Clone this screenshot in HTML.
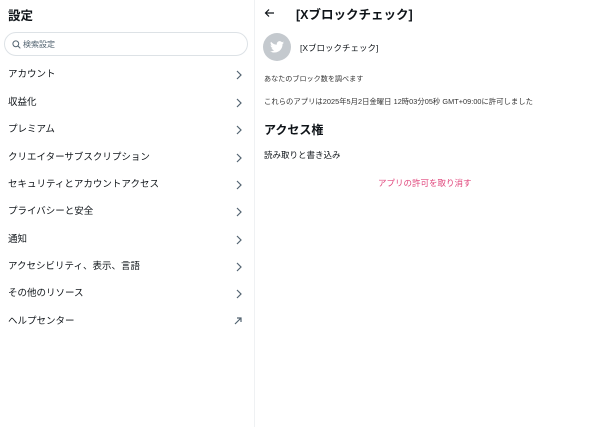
<!DOCTYPE html>
<html><head><meta charset="utf-8"><style>
body{margin:0;width:600px;height:427px;background:#fff;font-family:"Liberation Sans","Noto Sans CJK JP",sans-serif;color:#0f1419;position:relative;overflow:hidden}
.a{position:absolute;white-space:nowrap}
.left{position:absolute;left:0;top:0;width:254px;height:427px;border-right:1px solid #eff1f3}
.row{position:absolute;left:8px;width:236px;font-size:9.5px;line-height:12px}
.row svg{position:absolute;right:2px;top:1px}
</style></head><body>
<div class="left">
<div class="a" style="left:8px;top:5px;font-size:12.5px;font-weight:bold">設定</div>
<div class="a" style="left:4px;top:32px;width:244px;height:24px;border:1px solid #dde2e6;border-radius:13px;box-sizing:border-box"></div>
<svg class="a" style="left:12px;top:40px" width="9" height="9" viewBox="0 0 9 9"><circle cx="3.8" cy="3.8" r="2.9" fill="none" stroke="#536471" stroke-width="1"/><path d="M6 6L8.3 8.3" stroke="#536471" stroke-width="1"/></svg>
<div class="a" style="left:23px;top:39px;font-size:8px;color:#536471">検索設定</div>
<div class="row" style="top:69px">アカウント<svg width="6" height="10" viewBox="0 0 6 10"><path d="M1 1l4 4-4 4" fill="none" stroke="#536471" stroke-width="1.2"/></svg></div>
<div class="row" style="top:97px">収益化<svg width="6" height="10" viewBox="0 0 6 10"><path d="M1 1l4 4-4 4" fill="none" stroke="#536471" stroke-width="1.2"/></svg></div>
<div class="row" style="top:124px">プレミアム<svg width="6" height="10" viewBox="0 0 6 10"><path d="M1 1l4 4-4 4" fill="none" stroke="#536471" stroke-width="1.2"/></svg></div>
<div class="row" style="top:152px">クリエイターサブスクリプション<svg width="6" height="10" viewBox="0 0 6 10"><path d="M1 1l4 4-4 4" fill="none" stroke="#536471" stroke-width="1.2"/></svg></div>
<div class="row" style="top:179px">セキュリティとアカウントアクセス<svg width="6" height="10" viewBox="0 0 6 10"><path d="M1 1l4 4-4 4" fill="none" stroke="#536471" stroke-width="1.2"/></svg></div>
<div class="row" style="top:206px">プライバシーと安全<svg width="6" height="10" viewBox="0 0 6 10"><path d="M1 1l4 4-4 4" fill="none" stroke="#536471" stroke-width="1.2"/></svg></div>
<div class="row" style="top:234px">通知<svg width="6" height="10" viewBox="0 0 6 10"><path d="M1 1l4 4-4 4" fill="none" stroke="#536471" stroke-width="1.2"/></svg></div>
<div class="row" style="top:261px">アクセシビリティ、表示、言語<svg width="6" height="10" viewBox="0 0 6 10"><path d="M1 1l4 4-4 4" fill="none" stroke="#536471" stroke-width="1.2"/></svg></div>
<div class="row" style="top:288px">その他のリソース<svg width="6" height="10" viewBox="0 0 6 10"><path d="M1 1l4 4-4 4" fill="none" stroke="#536471" stroke-width="1.2"/></svg></div>
<div class="row" style="top:316px">ヘルプセンター<svg width="8" height="8" viewBox="0 0 8 8"><path d="M1 7L7 1M3 1h4v4" fill="none" stroke="#536471" stroke-width="1.2"/></svg></div>
</div>
<svg class="a" style="left:264px;top:8px" width="11" height="10" viewBox="0 0 11 10"><path d="M10 5H1.5M5 1.5L1.5 5 5 8.5" fill="none" stroke="#0f1419" stroke-width="1.2"/></svg>
<div class="a" style="left:296px;top:4px;font-size:12.5px;font-weight:bold">[Xブロックチェック]</div>
<div class="a" style="left:263px;top:33px;width:28px;height:28px;border-radius:50%;background:#c4c9ce"></div>
<svg class="a" style="left:270px;top:41px" width="14" height="12" viewBox="0 0 24 20"><path d="M24 2.4c-.9.4-1.8.6-2.8.8 1-.6 1.8-1.6 2.2-2.7-1 .6-2 1-3.1 1.2C19.3.7 18 0 16.6 0c-2.7 0-4.9 2.2-4.9 4.9 0 .4 0 .8.1 1.1C7.7 5.8 4.1 3.9 1.7.9c-.4.7-.7 1.6-.7 2.5 0 1.7.9 3.2 2.2 4.1-.8 0-1.6-.2-2.2-.6v.1c0 2.4 1.700 4.4 3.9 4.8-.4.1-.8.2-1.3.2-.3 0-.6 0-.9-.1.6 2 2.4 3.4 4.6 3.4-1.700 1.3-3.8 2.1-6.1 2.1-.4 0-.8 0-1.2-.1 2.2 1.4 4.8 2.2 7.5 2.2 9.1 0 14-7.5 14-14v-.6c1-.7 1.8-1.6 2.5-2.5z" fill="#fff"/></svg>
<div class="a" style="left:300px;top:42px;font-size:8.5px">[Xブロックチェック]</div>
<div class="a" style="left:264px;top:74px;font-size:7.1px;color:#333">あなたのブロック数を調べます</div>
<div class="a" style="left:264px;top:97px;font-size:7.3px;color:#333;letter-spacing:0.05px">これらのアプリは2025年5月2日金曜日 12時03分05秒 GMT+09:00に許可しました</div>
<div class="a" style="left:264px;top:121px;font-size:12px;font-weight:bold">アクセス権</div>
<div class="a" style="left:264px;top:149px;font-size:8.5px">読み取りと書き込み</div>
<div class="a" style="left:378px;top:177px;font-size:8.5px;color:#e0457b">アプリの許可を取り消す</div>
</body></html>
